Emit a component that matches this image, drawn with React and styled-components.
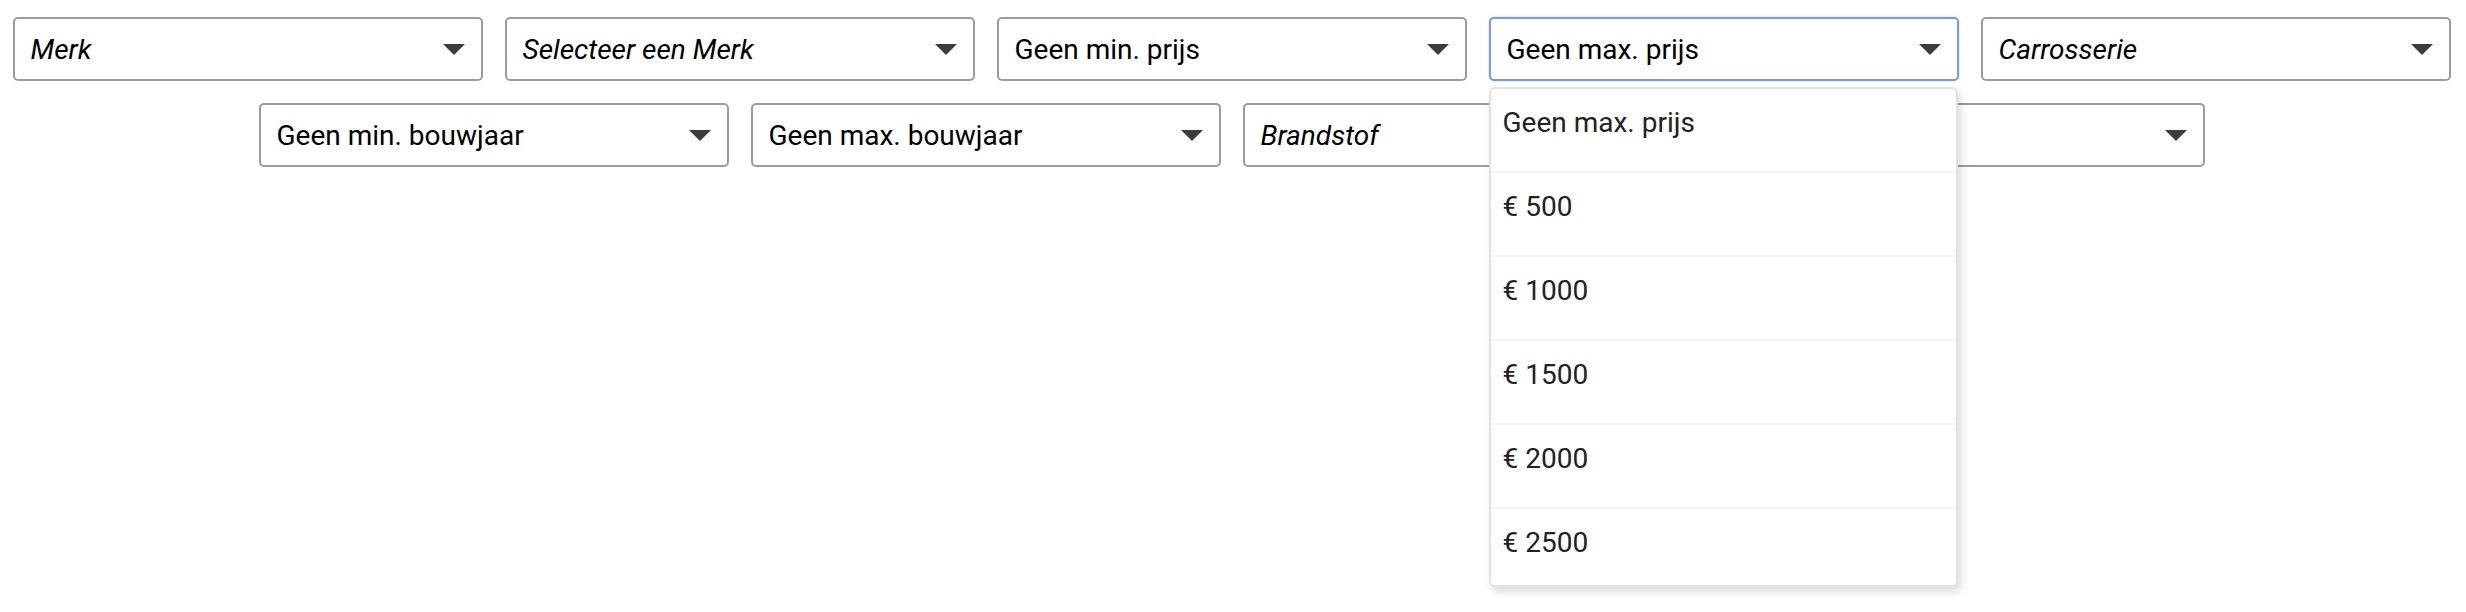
import styled, { createGlobalStyle } from "styled-components";

const GlobalStyle = createGlobalStyle`
  html, body {
    margin: 0;
    min-height: 100%;
    background: #ffffff;
    font-family: Roboto, "Noto Sans", Arial, sans-serif;
  }
`;

const Page = styled.div`
  box-sizing: border-box;
  min-height: 612px;
  padding: 17px 11px 0 8px;
`;

const Filters = styled.div`
  display: flex;
  flex-wrap: wrap;
  justify-content: center;
  gap: 22px;
`;

const SelectWrap = styled.div`
  position: relative;
  width: 470px;
`;

const SelectBox = styled.div`
  box-sizing: border-box;
  display: flex;
  align-items: center;
  justify-content: space-between;
  height: 64px;
  padding: 0 16px;
  background: #ffffff;
  border: 2px solid ${({ $open }) => ($open ? "#7d9cd6" : "#9c9c9c")};
  border-radius: 5px;
  box-shadow: ${({ $open }) =>
    $open ? "0 0 2px rgba(125, 156, 214, 0.6)" : "none"};
`;

const Label = styled.span`
  font-size: 28px;
  color: #000000;
  font-style: ${({ $placeholder }) => ($placeholder ? "italic" : "normal")};
  white-space: nowrap;
`;

const Arrow = styled.span`
  width: 0;
  height: 0;
  border-left: 11px solid transparent;
  border-right: 11px solid transparent;
  border-top: 11px solid #3c3c3c;
  filter: blur(0.4px);
`;

const Menu = styled.ul`
  position: absolute;
  top: 70px;
  left: 0;
  right: 1px;
  z-index: 10;
  box-sizing: border-box;
  height: 500px;
  margin: 0;
  padding: 0;
  list-style: none;
  overflow: hidden;
  background: #ffffff;
  border: 2px solid #e2e2e2;
  border-radius: 6px;
  box-shadow: 3px 5px 9px rgba(0, 0, 0, 0.14);
`;

const Option = styled.li`
  padding: 17px 12px 31px;
  font-size: 28px;
  line-height: 34px;
  color: #222222;
  border-bottom: 2px solid #f3f3f3;
`;

const selects = [
  { label: "Merk", placeholder: true },
  { label: "Selecteer een Merk", placeholder: true },
  { label: "Geen min. prijs" },
  {
    label: "Geen max. prijs",
    open: true,
    options: ["Geen max. prijs", "€ 500", "€ 1000", "€ 1500", "€ 2000", "€ 2500"],
  },
  { label: "Carrosserie", placeholder: true },
  { label: "Geen min. bouwjaar" },
  { label: "Geen max. bouwjaar" },
  { label: "Brandstof", placeholder: true },
  { label: "Transmissie", placeholder: true },
];

const Select = ({ label, placeholder, open, options }) => (
  <SelectWrap>
    <SelectBox $open={open}>
      <Label $placeholder={placeholder}>{label}</Label>
      <Arrow />
    </SelectBox>
    {open && (
      <Menu>
        {options.map((option) => (
          <Option key={option}>{option}</Option>
        ))}
      </Menu>
    )}
  </SelectWrap>
);

const App = () => {
  return (
    <Page>
      <GlobalStyle />
      <Filters>
        {selects.map((item) => (
          <Select key={item.label} {...item} />
        ))}
      </Filters>
    </Page>
  );
};

export default App;
